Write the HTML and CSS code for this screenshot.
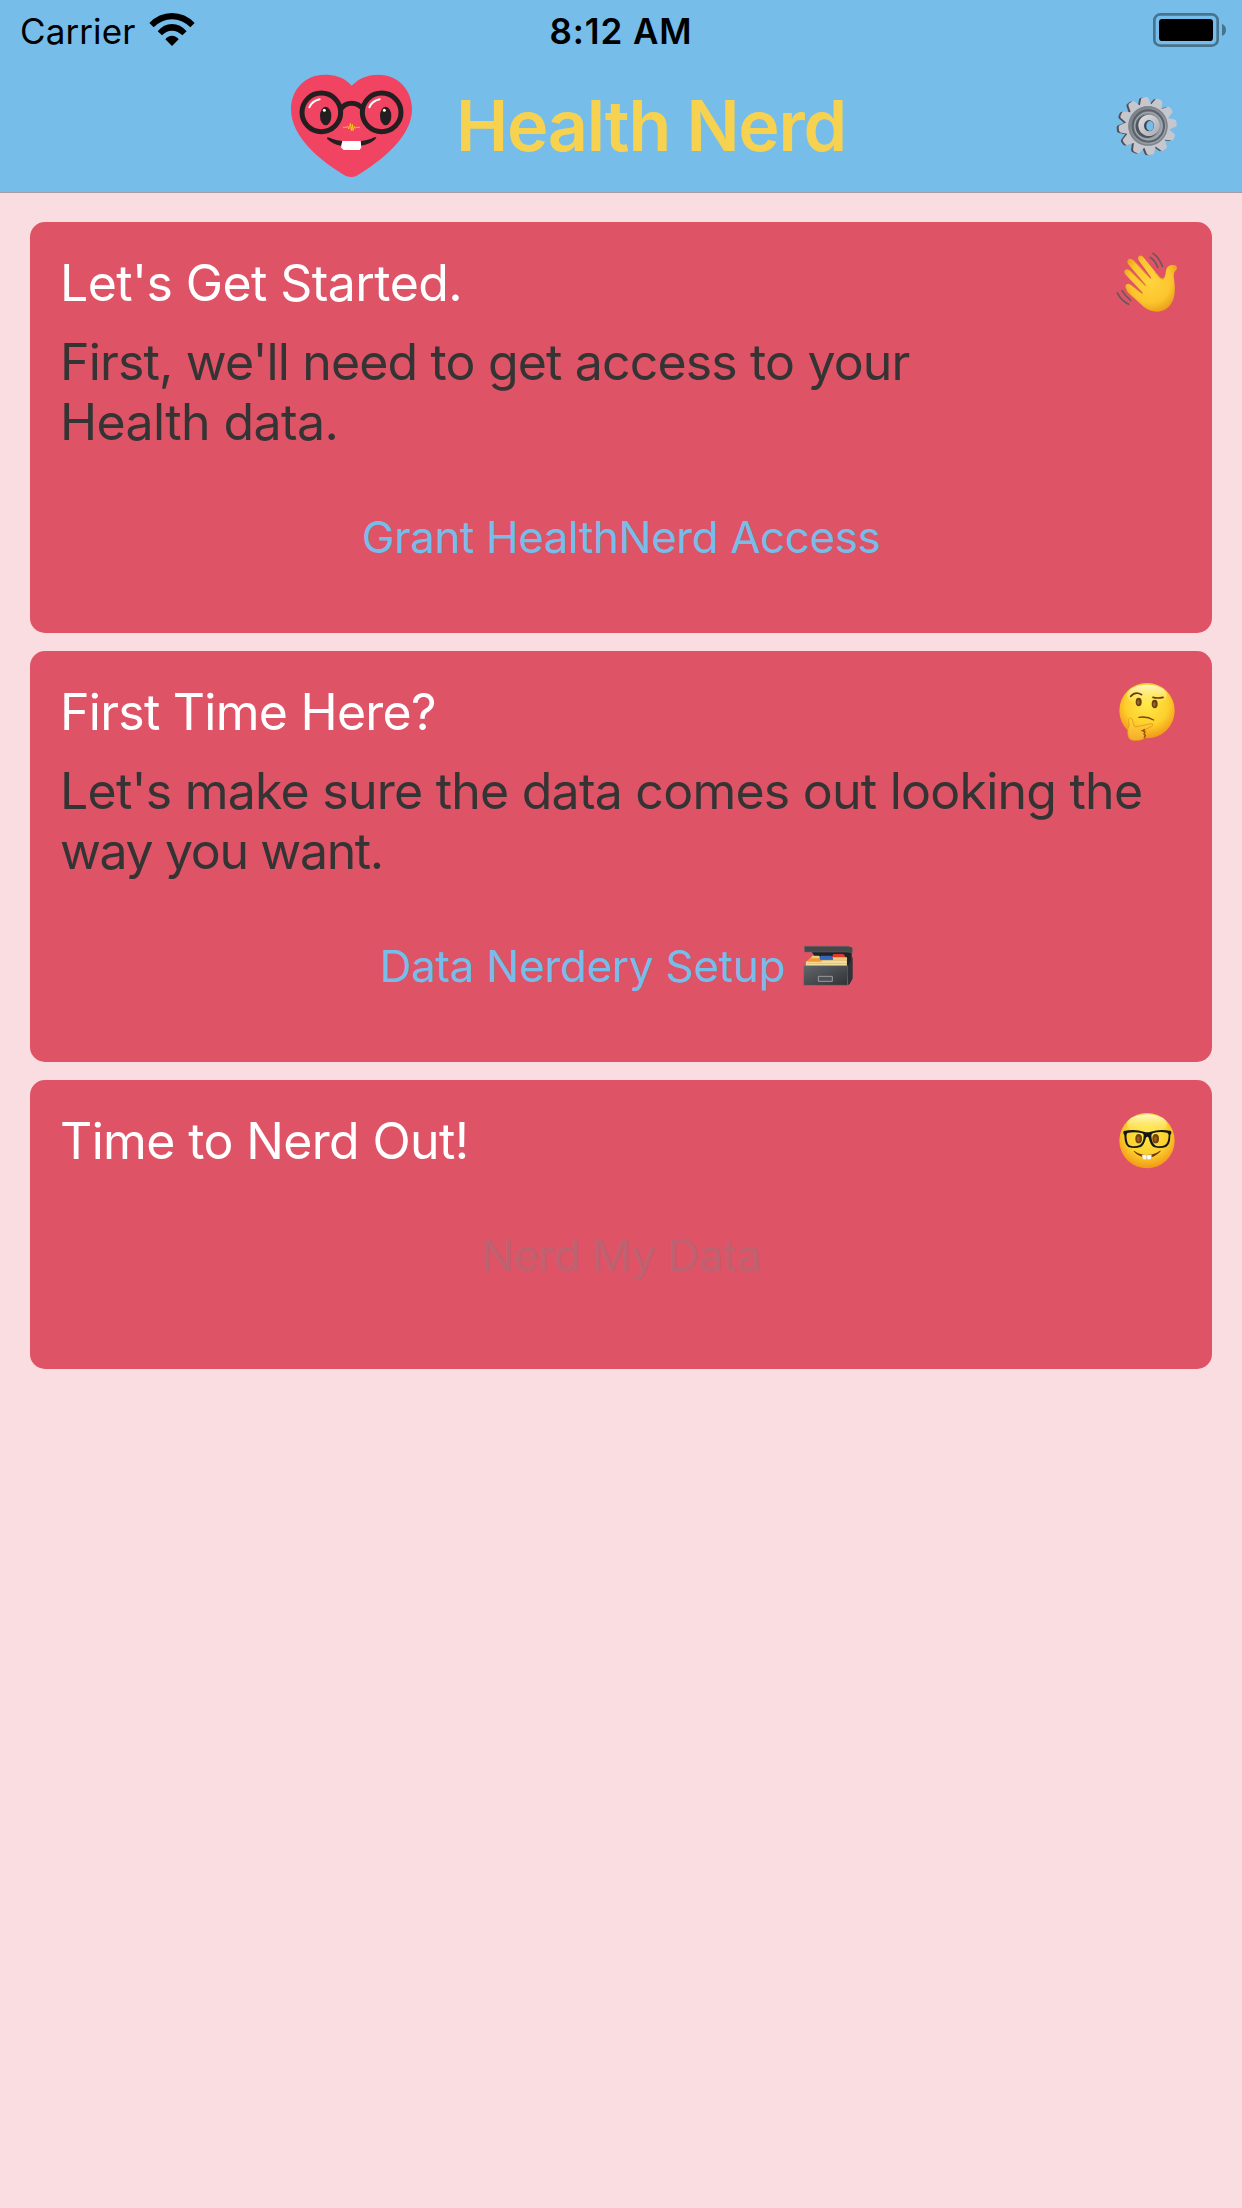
FILE: index.html
```html
<!DOCTYPE html>
<html lang="en">
<head>
<meta charset="utf-8">
<title>Health Nerd</title>
<link rel="stylesheet" href="styles.css">
</head>
<body>
<header class="header">
  <div class="status">
    <div class="status-left">
      <span class="carrier">Carrier</span>
      <svg class="wifi" viewBox="447 36 138 102" aria-hidden="true">
        <path d="M448 69Q476 39 516 39T584 69L571 82Q546 58 516 58T461 82Z"/>
        <path d="M473 94Q491 72 516 72T560 94L547 106Q534 92 516 92T486 106Z"/>
        <path d="M496 118Q504 107 516 107T536 118L516 138Z"/>
      </svg>
    </div>
    <span class="time">8:12 AM</span>
    <svg class="battery" viewBox="156 36 225 108" aria-hidden="true">
      <rect x="163" y="43" width="190" height="94" rx="18" fill="none" stroke="#48738f" stroke-width="8"/>
      <rect x="177" y="57" width="162" height="66" rx="10"/>
      <path d="M366 71Q378 77 378 90T366 108Z" fill="#48738f"/>
    </svg>
  </div>
  <nav class="nav">
    <svg class="logo" viewBox="30 24 369 315" aria-hidden="true">
      <path fill="#f04462" d="M215 62C193 35 160 29 134 29C73 29 33 76 33 133C33 215 119 287 196 332Q215 340 229 333C306 287 396 215 396 133C396 76 356 29 295 29C268 29 239 37 215 62Z"/>
      <g fill="none" stroke="#231f20" stroke-width="15">
        <circle cx="124" cy="142" r="58"/>
        <circle cx="305" cy="142" r="58"/>
        <path d="M182 133Q194 115 215 115T249 133"/>
      </g>
      <g fill="none" stroke="#fff" stroke-width="6" stroke-linecap="round">
        <path d="M88 127Q96 108 119 103"/>
        <path d="M268 127Q276 108 299 103"/>
      </g>
      <ellipse cx="137" cy="153" rx="17" ry="28" fill="#231f20"/>
      <ellipse cx="317" cy="153" rx="17" ry="28" fill="#231f20"/>
      <circle cx="133" cy="136" r="4.5" fill="#fff"/>
      <circle cx="313" cy="136" r="4.5" fill="#fff"/>
      <path fill="none" stroke="#fbd116" stroke-width="2.5" d="M189 187H200L203 183L206 192L209 184L211 175L214 197L217 178L219 197L223 184L226 190L229 187H240"/>
      <path fill="#231f20" d="M141 218Q148 217 156 221Q171 227 187 228L183 242Q157 237 141 221ZM289 216Q281 216 273 221Q257 227 243 228L242 242Q272 238 287 221Z"/>
      <path fill="#fff" d="M187 228H242L244 248Q241 250 239 255H191Q188 250 183 248Z"/>
    </svg>
    <h1 class="title">Health Nerd</h1>
    <svg class="gear" viewBox="45 282 192 192" aria-hidden="true">
      <defs>
        <linearGradient id="steel" x1="0" y1="0" x2="1" y2="1"><stop offset="0" stop-color="#e0e2e8"/><stop offset="1" stop-color="#a9a8b2"/></linearGradient>
        <linearGradient id="dish" x1="0" y1="0" x2="1" y2="1"><stop offset="0" stop-color="#747b83"/><stop offset="1" stop-color="#a6abb2"/></linearGradient>
        <path id="tooth" d="M-18-60L-11-83Q-9-87-4-87H4Q9-87 11-83L18-60Z"/>
        <g id="cog">
          <circle r="57" fill="none" stroke="currentColor" stroke-width="18"/>
          <g fill="currentColor">
            <use href="#tooth" transform="rotate(-6)"/><use href="#tooth" transform="rotate(24)"/>
            <use href="#tooth" transform="rotate(54)"/><use href="#tooth" transform="rotate(84)"/>
            <use href="#tooth" transform="rotate(114)"/><use href="#tooth" transform="rotate(144)"/>
            <use href="#tooth" transform="rotate(174)"/><use href="#tooth" transform="rotate(204)"/>
            <use href="#tooth" transform="rotate(234)"/><use href="#tooth" transform="rotate(264)"/>
            <use href="#tooth" transform="rotate(294)"/><use href="#tooth" transform="rotate(324)"/>
          </g>
        </g>
      </defs>
      <use href="#cog" x="137" y="379" color="#504e52"/>
      <use href="#cog" x="143" y="378" color="#c6c7ce"/>
      <circle cx="144" cy="378" r="59" fill="url(#dish)"/>
      <circle cx="144" cy="378" r="57" fill="none" stroke="#7d838b" stroke-width="4"/>
      <circle cx="145" cy="378" r="47" fill="none" stroke="#59616a" stroke-width="6"/>
      <circle cx="145" cy="378" r="41" fill="none" stroke="#a5abb2" stroke-width="3"/>
      <circle cx="142" cy="379" r="35" fill="#4d545c"/>
      <circle cx="147" cy="376" r="32" fill="url(#steel)"/>
      <ellipse cx="147" cy="377" rx="15" ry="17" fill="#42474e"/>
      <ellipse cx="150" cy="378" rx="11" ry="15" fill="#76bdea"/>
    </svg>
  </nav>
</header>

<main class="cards">
  <section class="card">
    <div class="card-head">
      <h2 class="heading h-started">Let's Get Started.</h2>
      <svg class="emoji" viewBox="45 45 192 192" aria-hidden="true">
        <defs><radialGradient id="skin" cx=".5" cy=".45" r=".6"><stop offset="0" stop-color="#ffd43f"/><stop offset=".65" stop-color="#fcc52d"/><stop offset="1" stop-color="#e69a16"/></radialGradient></defs>
        <path fill="url(#skin)" d="M77 158Q74 149 82 147Q88 145 94 151L124 175Q129 178 127 172L77 119Q69 110 76 104Q82 100 91 108L134 151Q138 154 137 149L86 89Q79 80 84 74Q91 68 100 76L148 128Q153 133 153 127L117 77Q111 68 117 63Q125 59 132 69L174 121Q182 133 190 130Q197 126 197 112Q199 92 214 90Q229 88 231 97Q232 102 224 110Q220 115 222 131C228 174 224 205 197 223C177 235 151 231 132 216L93 181Q80 170 77 158Z"/>
        <path fill="none" stroke="#e5a019" stroke-width="3" stroke-linecap="round" d="M94 151L126 176M91 108L137 153M100 76L151 130M166 112L179 128Q184 134 191 132"/>
        <path fill="none" stroke="#68595a" stroke-width="5" stroke-linecap="round" d="M159 55Q179 70 187 94M151 67Q167 78 173 97M66 167Q76 184 92 196M52 174Q64 197 86 208"/>
      </svg>
    </div>
    <p class="body-text"><span class="line-access">First, we'll need to get access to your</span><br><span class="line-health">Health data.</span></p>
    <a class="action a-grant">Grant HealthNerd Access</a>
  </section>

  <section class="card">
    <div class="card-head">
      <h2 class="heading h-first">First Time Here?</h2>
      <svg class="emoji" viewBox="45 42 192 192" aria-hidden="true">
        <defs>
          <radialGradient id="face" cx=".5" cy=".38" r=".65"><stop offset="0" stop-color="#ffe94a"/><stop offset=".6" stop-color="#fdcf2c"/><stop offset="1" stop-color="#f09014"/></radialGradient>
          <linearGradient id="shine" x1="0" y1="0" x2="0" y2="1"><stop offset="0" stop-color="#fffbd2" stop-opacity=".95"/><stop offset="1" stop-color="#fff06a" stop-opacity="0"/></linearGradient>
          <linearGradient id="hand" x1="0" y1="0" x2="0" y2="1"><stop offset="0" stop-color="#ffd83c"/><stop offset="1" stop-color="#f6aa2a"/></linearGradient>
        </defs>
        <circle cx="141" cy="137" r="83" fill="url(#face)"/>
        <ellipse cx="141" cy="91" rx="60" ry="32" fill="url(#shine)"/>
        <path fill="none" stroke="#643c0c" stroke-width="5" stroke-linecap="round" d="M92 94Q106 78 125 89M159 97Q173 101 189 97"/>
        <ellipse cx="116" cy="111" rx="9" ry="12.500" fill="#66400e"/>
        <ellipse cx="164" cy="117" rx="9" ry="12.500" fill="#66400e"/>
        <ellipse cx="115" cy="112" rx="4" ry="7" fill="#97651d"/>
        <ellipse cx="163" cy="118" rx="4" ry="7" fill="#97651d"/>
        <path fill="none" stroke="#734610" stroke-width="4" stroke-linecap="round" d="M117 157Q141 153 161 165"/>
        <path fill="url(#hand)" stroke="#dd8913" stroke-width="2" d="M91 159Q84 161 86 171L88 181Q81 190 83 206Q84 227 104 227Q120 228 133 221Q139 215 135 208Q139 201 134 194L152 186Q162 181 158 177Q153 175 143 178L106 186Q99 181 99 172Q98 160 91 159Z"/>
        <path fill="none" stroke="#93500b" stroke-width="4" d="M135 193L127 197L134 200L132 207L136 211L132 219"/>
      </svg>
    </div>
    <p class="body-text"><span class="line-looking">Let's make sure the data comes out looking the</span><br><span class="line-way">way you want.</span></p>
    <a class="action a-setup"><span>Data Nerdery Setup</span>
      <svg class="box" viewBox="42 45 150 123" aria-hidden="true">
        <defs><linearGradient id="metal" x1="0" y1="0" x2="1" y2="1"><stop offset="0" stop-color="#62666a"/><stop offset="1" stop-color="#303235"/></linearGradient></defs>
        <path fill="#202226" d="M67 64L188 51V151L179 166L170 108L78 81Z"/>
        <path fill="#df3a27" d="M129 80L133 72H163L168 78V88H129Z"/>
        <path fill="#e8cb83" d="M66 83L70 77H90L94 82H174V112H50L51 96Z"/>
        <path fill="#3267bb" d="M91 84L96 77H127L132 84V91H91Z"/>
        <path fill="#f5952d" d="M56 94L61 85H91L97 93V101H55Z"/>
        <path fill="#f5de9b" d="M51 95H97L101 91H171V112H51Z"/>
        <path fill="none" stroke="#c8a55e" stroke-width="1.500" d="M95 91H174M52 100H171"/>
        <path fill="url(#metal)" stroke="#777a7d" stroke-width="1.500" d="M44 107H176V166H44Z"/>
        <path fill="#303337" d="M177 107L191 80V145L177 166Z"/>
        <path fill="#45484b" stroke="#66686b" stroke-width="1.500" d="M46 49H178L190 54V68L174 66H47Z"/>
        <path fill="#4d5154" stroke="#9b9c9d" stroke-width="3" d="M88 139H130V154H88Z"/>
      </svg>
    </a>
  </section>

  <section class="card card-short">
    <div class="card-head">
      <h2 class="heading h-time">Time to Nerd Out!</h2>
      <svg class="emoji" viewBox="45 39 192 192" aria-hidden="true">
        <circle cx="141" cy="137" r="83" fill="url(#face)"/>
        <ellipse cx="141" cy="88" rx="60" ry="30" fill="url(#shine)"/>
        <ellipse cx="116" cy="131" rx="10" ry="14" fill="#71420c"/>
        <ellipse cx="167" cy="131" rx="10" ry="14" fill="#71420c"/>
        <ellipse cx="115" cy="132" rx="4" ry="8" fill="#9a601c"/>
        <ellipse cx="166" cy="132" rx="4" ry="8" fill="#9a601c"/>
        <path fill="#141719" fill-rule="evenodd" d="M71 108Q105 101 132 110Q142 114 152 110Q180 101 213 108Q217 115 211 121Q211 150 198 156Q180 162 161 156Q151 150 146 128Q142 122 138 128Q133 150 122 156Q103 162 85 156Q74 150 73 121Q67 115 71 108ZM82 114Q77 120 82 141Q84 151 92 152Q104 156 118 151Q131 144 131 120Q131 115 124 114Q102 109 82 114ZM160 114Q153 116 154 124Q156 147 167 152Q181 156 194 151Q205 146 206 121Q206 115 201 113Q180 109 160 114Z"/>
        <path fill="#713908" d="M102 167Q140 193 180 167Q183 166 181 170Q164 185 154 186L151 181H128L126 185Q112 182 101 169Z"/>
        <path fill="#fff" stroke="#b9b0a1" stroke-width="1" d="M126 180Q133 179 140 180V192Q133 195 129 192ZM141 180Q149 181 155 179L153 192Q146 195 141 192Z"/>
      </svg>
    </div>
    <a class="action disabled a-nerd">Nerd My Data</a>
  </section>
</main>
</body>
</html>
```
FILE: styles.css
```css
* { box-sizing: border-box; }
body {
  margin: 0;
  min-height: 2208px;
  background: #fadde0;
  font-family: Inter, "Liberation Sans", sans-serif;
  color: #000;
  white-space: nowrap;
}
svg { display: block; flex: none; }
h1, h2, p { margin: 0; font-weight: 400; }

.header {
  height: 193px;
  background: #76bdea;
  border-bottom: 1px solid #a99ba6;
}
.status {
  display: grid;
  grid-template-columns: 1fr auto 1fr;
  height: 60px;
  padding: 0 15px;
  font-size: 35px;
  line-height: 62px;
}
.status-left { display: flex; padding-left: 5px; }
.carrier { width: 129px; letter-spacing: 0.1px; }
.wifi { width: 46px; height: 34px; margin-top: 12px; }
.time { font-weight: 600; letter-spacing: 0.9px; }
.battery { width: 75px; height: 36px; margin-top: 12px; justify-self: end; }

.nav {
  display: flex;
  align-items: center;
  height: 132px;
  padding: 0 63px 0 290px;
}
.logo { width: 123px; height: 105px; margin-bottom: 2px; }
.title {
  flex: 1;
  margin-left: 43px;
  font-size: 70px;
  font-weight: 600;
  line-height: 132px;
  letter-spacing: -1.25px;
  color: #f6d250;
}
.gear { width: 64px; height: 64px; }

.cards {
  display: flex;
  flex-direction: column;
  gap: 18px;
  padding: 29px 30px;
}
.card {
  display: flex;
  flex-direction: column;
  height: 411px;
  padding: 28px 33px 0 30px;
  border-radius: 15px;
  background: #de5366;
}
.card-short { height: 289px; }
.card-head {
  display: flex;
  justify-content: space-between;
  height: 66px;
}
.heading { font-size: 50px; line-height: 66px; color: #fff; }
.h-started { letter-spacing: -0.58px; }
.h-first { letter-spacing: -0.74px; }
.h-time { letter-spacing: -0.64px; }
.emoji { width: 64px; height: 64px; }
.body-text {
  margin-top: 16px;
  font-size: 50px;
  line-height: 60px;
  color: #343434;
}
.line-access { letter-spacing: -0.85px; }
.line-health { letter-spacing: -0.6px; }
.line-looking { letter-spacing: -0.76px; }
.line-way { letter-spacing: -1.35px; }
.action {
  display: flex;
  justify-content: center;
  gap: 18px;
  margin: 55px -3px 0 0;
  font-size: 44px;
  line-height: 60px;
  color: #76bdea;
}
.a-grant { letter-spacing: -0.45px; }
.a-setup { padding-right: 9px; letter-spacing: -0.3px; }
.a-nerd { margin-top: 51px; letter-spacing: -0.55px; }
.box { width: 50px; height: 41px; margin-top: 9px; }
.disabled { color: #bd6270; }
```
